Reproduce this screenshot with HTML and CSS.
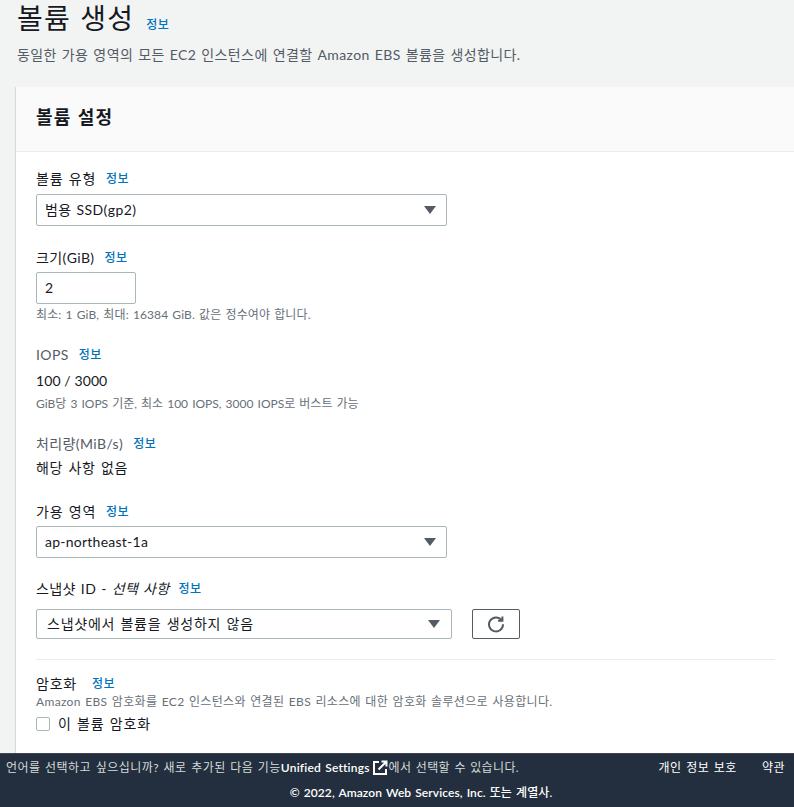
FILE: index.html
```html
<!DOCTYPE html>
<html lang="ko">
<head>
<meta charset="utf-8">
<title>볼륨 생성</title>
<link rel="stylesheet" href="styles.css">
</head>
<body>
<main class="main">
  <header class="page-head">
    <div class="title-row">
      <h1 class="title">볼륨 생성</h1>
      <a class="info info-title">정보</a>
    </div>
    <p class="subtitle">동일한 가용 영역의 모든 EC2 인스턴스에 연결할 Amazon EBS 볼륨을 생성합니다.</p>
  </header>
  <section class="card">
    <div class="card-head"><h2 class="card-title">볼륨 설정</h2></div>
    <div class="card-body">
      <div class="field f-type">
        <div class="label-row"><span class="label label-ko">볼륨 유형</span><a class="info">정보</a></div>
        <div class="select select-main"><span>범용 SSD(gp2)</span><i class="caret"></i></div>
      </div>
      <div class="field f-size">
        <div class="label-row"><span class="label">크기(GiB)</span><a class="info">정보</a></div>
        <div class="input">2</div>
        <p class="hint hint-size">최소: 1 GiB, 최대: 16384 GiB. 값은 정수여야 합니다.</p>
      </div>
      <div class="field f-iops">
        <div class="label-row"><span class="label label-muted">IOPS</span><a class="info">정보</a></div>
        <div class="value value-iops">100 / 3000</div>
        <p class="hint hint-iops">GiB당 3 IOPS 기준, 최소 100 IOPS, 3000 IOPS로 버스트 가능</p>
      </div>
      <div class="field f-through">
        <div class="label-row"><span class="label label-muted">처리량(MiB/s)</span><a class="info">정보</a></div>
        <div class="value value-through">해당 사항 없음</div>
      </div>
      <div class="field f-az">
        <div class="label-row"><span class="label label-ko">가용 영역</span><a class="info">정보</a></div>
        <div class="select select-main select-az"><span>ap-northeast-1a</span><i class="caret"></i></div>
      </div>
      <div class="field f-snap">
        <div class="label-row label-row-snap"><span class="label">스냅샷 ID - <em class="optional">선택 사항</em></span><a class="info">정보</a></div>
        <div class="snap-row">
          <div class="select select-snap"><span>스냅샷에서 볼륨을 생성하지 않음</span><i class="caret"></i></div>
          <button class="refresh" type="button" aria-label="새로 고침">
            <svg width="18" height="18" viewBox="0 0 18 18" fill="none" stroke="#545b64" stroke-width="2"><path d="M14.6 5.2A7 7 0 1 0 16 9.2"/><path d="M15.4 1.4v4.4H11" stroke-linejoin="miter"/></svg>
          </button>
        </div>
      </div>
      <hr class="divider">
      <div class="field f-enc">
        <div class="label-row"><span class="label label-ko">암호화</span><a class="info info-enc">정보</a></div>
        <p class="hint hint-enc">Amazon EBS 암호화를 EC2 인스턴스와 연결된 EBS 리소스에 대한 암호화 솔루션으로 사용합니다.</p>
        <label class="check-row"><i class="checkbox"></i><span class="label-ko">이 볼륨 암호화</span></label>
      </div>
    </div>
  </section>
</main>
<footer class="footer">
  <div class="foot-top">
    <p class="foot-lang">언어를 선택하고 싶으십니까? 새로 추가된 다음 기능<strong class="foot-link">Unified Settings</strong><svg class="ext" width="16" height="16" viewBox="0 0 16 16" fill="none" stroke="#fff" stroke-width="2"><path d="M7 2H2v12h12V9"/><path d="M6.5 9.5 14 2M9.5 1.5h5v5"/></svg><span class="foot-tail">에서 선택할 수 있습니다.</span></p>
    <nav class="foot-nav"><a>개인 정보 보호</a><a>약관</a></nav>
  </div>
  <p class="foot-copy">© 2022, Amazon Web Services, Inc. <span class="foot-ko">또는 계열사.</span></p>
</footer>
</body>
</html>
```
FILE: styles.css
```css
* { box-sizing: border-box; }
html, body { margin: 0; padding: 0; height: 807px; overflow: hidden; }
body {
  background: #f2f3f3;
  color: #16191f;
  font-family: "Lato", "Noto Sans CJK KR", sans-serif;
  font-size: 14px;
  line-height: 22px;
  letter-spacing: 0.4px;
  word-spacing: 1px;
  display: flex;
  flex-direction: column;
}
p, h1, h2 { margin: 0; }
.main { flex: 1; min-height: 0; overflow: hidden; padding-left: 15px; }
.page-head { padding-left: 2px; }
.title-row { display: flex; align-items: baseline; gap: 12px; height: 36px; }
.title { font-size: 28px; line-height: 36px; font-weight: 400; letter-spacing: 1.2px; color: #16191f; }
.info { color: #0073bb; font-size: 12px; font-weight: 500; line-height: 16px; }
.subtitle { font-size: 14px; line-height: 22px; color: #545b64; margin-top: 8px; }
.card {
  margin-top: 21px;
  background: #fff;
  border-left: 1px solid #d5dbdb;
  height: 680px;
  box-shadow: 0 1px 1px rgba(0,28,36,.1);
}
.card-head { height: 65px; background: #fafafa; border-bottom: 1px solid #eaeded; padding: 18px 20px 0; }
.card-title { font-size: 18px; line-height: 24px; font-weight: 700; letter-spacing: 1.1px; color: #16191f; }
.card-body { padding: 16px 19px 0 20px; }
.label-row { display: flex; align-items: center; gap: 10px; height: 22px; }
.label-row-snap { gap: 9px; }
.label { font-size: 14px; color: #16191f; }
.label-ko { letter-spacing: 0.8px; word-spacing: 1px; }
.label-muted { color: #545b64; }
.optional { font-style: italic; }
.field { display: block; }
.select, .input {
  background: #fff;
  border: 1px solid #aab7b8;
  border-radius: 2px;
  display: flex;
  align-items: center;
}
.select-main { width: 411px; height: 32px; margin-top: 4px; padding: 0 9px 0 8px; justify-content: space-between; }
.select-az { margin-top: 3px; letter-spacing: 0.25px; }
.select-snap { width: 416px; height: 30px; padding: 0 10px 0 10px; justify-content: space-between; letter-spacing: 0.75px; }
.caret { width: 0; height: 0; border-left: 6px solid transparent; border-right: 6px solid transparent; border-top: 8px solid #545b64; margin-right: 1px; }
.input { width: 100px; height: 32px; margin-top: 3px; padding-left: 8px; }
.hint { font-size: 12px; line-height: 16px; color: #687078; }
.hint-size { margin-top: 3px; letter-spacing: 0.1px; }
.f-size { margin-top: 21px; }
.f-iops { margin-top: 21px; }
.value-iops { margin-top: 4px; letter-spacing: 0.1px; word-spacing: 0; }
.hint-iops { margin-top: 4px; letter-spacing: 0; }
.f-through { margin-top: 21px; }
.value-through { margin-top: 2px; letter-spacing: 0.7px; }
.f-az { margin-top: 22px; }
.f-snap { margin-top: 20px; }
.snap-row { display: flex; gap: 20px; margin-top: 9px; }
.refresh {
  width: 48px; height: 30px; background: #fff; border: 1px solid #545b64; border-radius: 2px;
  padding: 0; display: flex; align-items: center; justify-content: center;
}
.divider { border: 0; border-top: 1px solid #eaeded; margin: 20px 0 0; }
.f-enc { margin-top: 13px; }
.info-enc { margin-left: 5px; }
.hint-enc { margin-top: -1px; letter-spacing: 0.34px; }
.check-row { display: flex; align-items: center; gap: 8px; margin-top: 3px; }
.checkbox { width: 14px; height: 14px; border: 1px solid #aab7b8; border-radius: 2px; background: #fff; }
.footer { height: 54px; flex: none; background: #232f3e; color: #d5dbdb; font-size: 12px; border-top: 1px solid #414750; }
.foot-top { display: flex; justify-content: space-between; padding: 2px 9px 0 6px; height: 26px; align-items: center; }
.foot-lang { display: flex; align-items: center; letter-spacing: 0.47px; }
.foot-link { color: #fff; font-weight: 600; letter-spacing: 0.2px; }
.foot-tail { letter-spacing: 0.35px; }
.ext { margin: 0 1px 0 2px; }
.foot-nav { display: flex; gap: 25px; color: #fff; letter-spacing: 0.5px; }
.foot-copy { color: #fff; text-align: center; font-weight: 600; margin-top: 2px; padding-left: 48px; letter-spacing: 0.08px; }
.foot-ko { font-weight: 500; }
```
